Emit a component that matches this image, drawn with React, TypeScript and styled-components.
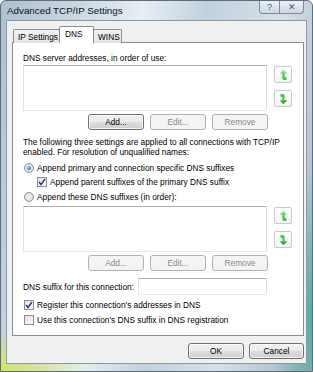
import React from 'react';
import styled, { createGlobalStyle } from 'styled-components';

const GlobalStyle = createGlobalStyle`
  html, body {
    margin: 0;
    padding: 0;
    background: #ffffff;
  }
  body {
    font-family: "Liberation Sans", Arial, sans-serif;
    font-size: 8.3px;
    color: #000;
  }
`;

const Window = styled.div`
  width: 313px;
  height: 372px;
  box-sizing: border-box;
  border: 1px solid #5d6d7c;
  border-radius: 6px 6px 0 0;
  display: flex;
  flex-direction: column;
  overflow: hidden;
  background:
    radial-gradient(ellipse 90px 40px at 0% 100%, rgba(214, 232, 90, 0.95), rgba(214, 232, 90, 0) 100%),
    radial-gradient(ellipse 40px 140px at 100% 85%, rgba(70, 170, 150, 0.85), rgba(70, 170, 150, 0) 100%),
    linear-gradient(100deg, #aebfcf 0%, #c9d6e2 20%, #e7eef4 38%, #c2d1dd 55%, #d5e0e9 75%, #9fb3c4 100%);
`;

const TitleBar = styled.div`
  height: 19px;
  display: flex;
  align-items: flex-start;
  justify-content: space-between;
  padding-left: 6px;
`;

const Title = styled.span`
  font-size: 9.8px;
  line-height: 20px;
  color: #111;
`;

const CaptionButtons = styled.div`
  display: flex;
  margin-right: 8px;
  margin-top: -1px;
`;

const CaptionButton = styled.div<{ $w: number }>`
  width: ${p => p.$w}px;
  height: 14px;
  box-sizing: border-box;
  border: 1px solid #7e8c99;
  border-top: none;
  background: linear-gradient(#eef3f7, #cdd8e1);
  display: flex;
  align-items: center;
  justify-content: center;
  color: #555;
  font-size: 9px;
  &:first-child {
    border-radius: 0 0 0 4px;
    border-right: none;
  }
  &:last-child {
    border-radius: 0 0 4px 0;
  }
`;

const Client = styled.div`
  flex: 1;
  margin: 0 5px 7px 5px;
  background: #f0f0f0;
  border: 1px solid #8c9aa6;
  display: flex;
  flex-direction: column;
  padding: 5px 4px 0 5px;
`;

const TabStrip = styled.div`
  display: flex;
  align-items: flex-end;
  height: 17px;
  padding-left: 1px;
  position: relative;
  z-index: 1;
`;

const Tab = styled.div<{ $active?: boolean; $w: number }>`
  width: ${p => p.$w}px;
  height: ${p => (p.$active ? 17 : 14)}px;
  box-sizing: border-box;
  padding-left: ${p => (p.$active ? 5 : 4)}px;
  border: 1px solid #898c95;
  border-bottom: ${p => (p.$active ? '1px solid #fff' : 'none')};
  margin-left: ${p => (p.$active ? '-1px' : '0')};
  margin-right: ${p => (p.$active ? '-1px' : '0')};
  background: ${p => (p.$active ? '#fff' : 'linear-gradient(#f3f3f3, #e3e3e3)')};
  display: flex;
  align-items: ${p => (p.$active ? 'flex-start' : 'center')};
  padding-top: ${p => (p.$active ? '2px' : '0')};
  border-radius: 2px 2px 0 0;
`;

const Panel = styled.div`
  margin-top: -1px;
  width: 292px;
  height: 294px;
  box-sizing: border-box;
  border: 1px solid #898c95;
  background: #fff;
  padding: 10px 0 0 10px;
  display: flex;
  flex-direction: column;
`;

const Label = styled.div`
  line-height: 10px;
`;

const ListRow = styled.div<{ $top: number }>`
  display: flex;
  gap: 7px;
  margin-top: ${p => p.$top}px;
`;

const ListBox = styled.div`
  width: 244px;
  height: 46px;
  box-sizing: border-box;
  border: 1px solid #8e8f8f;
  border-color: #abadb3 #dbdfe6 #e3e9ef #e2e3ea;
  background: #fff;
`;

const ArrowColumn = styled.div`
  display: flex;
  flex-direction: column;
  gap: 7px;
  padding-top: 1px;
`;

const ArrowButton = styled.div`
  width: 18px;
  height: 17px;
  box-sizing: border-box;
  border: 1px solid #c8cacc;
  border-radius: 2px;
  background: linear-gradient(#ffffff, #f3f3f3);
  display: flex;
  align-items: center;
  justify-content: center;
`;

const ButtonRow = styled.div<{ $top: number }>`
  display: flex;
  gap: 6px;
  padding-left: 65px;
  margin-top: ${p => p.$top}px;
`;

const Button = styled.div<{ $disabled?: boolean; $w?: number }>`
  width: ${p => p.$w ?? 56}px;
  height: 16px;
  box-sizing: border-box;
  border: 1px solid ${p => (p.$disabled ? '#adb2b5' : '#707070')};
  border-radius: 3px;
  background: ${p =>
    p.$disabled
      ? '#f4f4f4'
      : 'linear-gradient(#f2f2f2 0%, #ebebeb 50%, #dddddd 51%, #cfcfcf 100%)'};
  color: ${p => (p.$disabled ? '#8b8b8b' : '#000')};
  box-shadow: ${p => (p.$disabled ? 'none' : 'inset 0 0 0 1px rgba(255,255,255,0.7)')};
  display: flex;
  align-items: center;
  justify-content: center;
`;

const Paragraph = styled.div`
  margin-top: 7px;
  line-height: 10px;
`;

const OptionRow = styled.div<{ $indent?: number; $top: number }>`
  display: flex;
  align-items: center;
  gap: 3px;
  margin-top: ${p => p.$top}px;
  padding-left: ${p => p.$indent ?? 1}px;
  height: 11px;
`;

const Radio = styled.span<{ $checked?: boolean }>`
  width: 10px;
  height: 10px;
  box-sizing: border-box;
  border-radius: 50%;
  border: 1px solid #8f8f8f;
  background: radial-gradient(circle, #f0f0f0 0%, #e0e0e0 60%, #f4f4f4 100%);
  display: flex;
  align-items: center;
  justify-content: center;
  &::after {
    content: '';
    display: ${p => (p.$checked ? 'block' : 'none')};
    width: 4px;
    height: 4px;
    border-radius: 50%;
    background: radial-gradient(circle at 40% 35%, #9be6ff, #1a72c8 70%);
  }
`;

const Checkbox = styled.span`
  width: 10px;
  height: 10px;
  box-sizing: border-box;
  border: 1px solid #8f8f8f;
  background: linear-gradient(135deg, #e2e2e2, #f8f8f8);
  display: flex;
  align-items: center;
  justify-content: center;
`;

const SuffixRow = styled.div`
  display: flex;
  align-items: center;
  margin-top: 7px;
  gap: 4px;
`;

const TextBox = styled.div`
  width: 129px;
  height: 17px;
  box-sizing: border-box;
  border: 1px solid #abadb3;
  border-color: #abadb3 #dbdfe6 #e3e9ef #e2e3ea;
  background: #fff;
`;

const Footer = styled.div`
  display: flex;
  justify-content: flex-end;
  gap: 5px;
  margin-top: 7px;
  width: 292px;
`;

// green "move up" arrow: head on top, stem with a kink to the right at the foot
const UpIcon = () => (
  <svg width="7" height="10" viewBox="0 0 7 10">
    <path d="M3.5 0 L7 3.5 L4.6 3.5 L4.6 7 L6.5 7 L6.5 10 L3.6 10 L2.4 8.8 L2.4 3.5 L0 3.5 Z" fill="#46c746" />
    <path d="M3.5 0 L7 3.5 L4.6 3.5 L3.5 2 L2.4 3.5 L0 3.5 Z" fill="#8fe98a" />
  </svg>
);

const DownIcon = () => (
  <svg width="7" height="10" viewBox="0 0 7 10">
    <path d="M3.5 10 L7 6.5 L4.6 6.5 L4.6 1.2 L3.4 0 L0.5 0 L0.5 3 L2.4 3 L2.4 6.5 L0 6.5 Z" fill="#46c746" />
    <path d="M3.5 10 L7 6.5 L4.6 6.5 L3.5 8 L2.4 6.5 L0 6.5 Z" fill="#2fa82f" />
  </svg>
);

const Check = () => (
  <svg width="8" height="8" viewBox="0 0 8 8">
    <path d="M1 4 L3 6.5 L7 1" stroke="#1f3c8a" strokeWidth="1.4" fill="none" />
  </svg>
);

const Arrows = () => (
  <ArrowColumn>
    <ArrowButton><UpIcon /></ArrowButton>
    <ArrowButton><DownIcon /></ArrowButton>
  </ArrowColumn>
);

export default function App() {
  return (
    <>
      <GlobalStyle />
      <Window>
        <TitleBar>
          <Title>Advanced TCP/IP Settings</Title>
          <CaptionButtons>
            <CaptionButton $w={20}>?</CaptionButton>
            <CaptionButton $w={25}>✕</CaptionButton>
          </CaptionButtons>
        </TitleBar>
        <Client>
          <TabStrip>
            <Tab $w={47}>IP Settings</Tab>
            <Tab $w={35} $active>DNS</Tab>
            <Tab $w={29}>WINS</Tab>
          </TabStrip>
          <Panel>
            <Label>DNS server addresses, in order of use:</Label>
            <ListRow $top={2}>
              <ListBox />
              <Arrows />
            </ListRow>
            <ButtonRow $top={3}>
              <Button>Add...</Button>
              <Button $disabled>Edit...</Button>
              <Button $disabled>Remove</Button>
            </ButtonRow>
            <Paragraph>
              The following three settings are applied to all connections with TCP/IP
              <br />
              enabled. For resolution of unqualified names:
            </Paragraph>
            <OptionRow $top={5}>
              <Radio $checked />
              Append primary and connection specific DNS suffixes
            </OptionRow>
            <OptionRow $top={3} $indent={14}>
              <Checkbox><Check /></Checkbox>
              Append parent suffixes of the primary DNS suffix
            </OptionRow>
            <OptionRow $top={4}>
              <Radio />
              Append these DNS suffixes (in order):
            </OptionRow>
            <ListRow $top={4}>
              <ListBox />
              <Arrows />
            </ListRow>
            <ButtonRow $top={3}>
              <Button $disabled>Add...</Button>
              <Button $disabled>Edit...</Button>
              <Button $disabled>Remove</Button>
            </ButtonRow>
            <SuffixRow>
              <Label>DNS suffix for this connection:</Label>
              <TextBox />
            </SuffixRow>
            <OptionRow $top={4}>
              <Checkbox><Check /></Checkbox>
              Register this connection's addresses in DNS
            </OptionRow>
            <OptionRow $top={4}>
              <Checkbox />
              Use this connection's DNS suffix in DNS registration
            </OptionRow>
          </Panel>
          <Footer>
            <Button $w={56}>OK</Button>
            <Button $w={55}>Cancel</Button>
          </Footer>
        </Client>
      </Window>
    </>
  );
}
